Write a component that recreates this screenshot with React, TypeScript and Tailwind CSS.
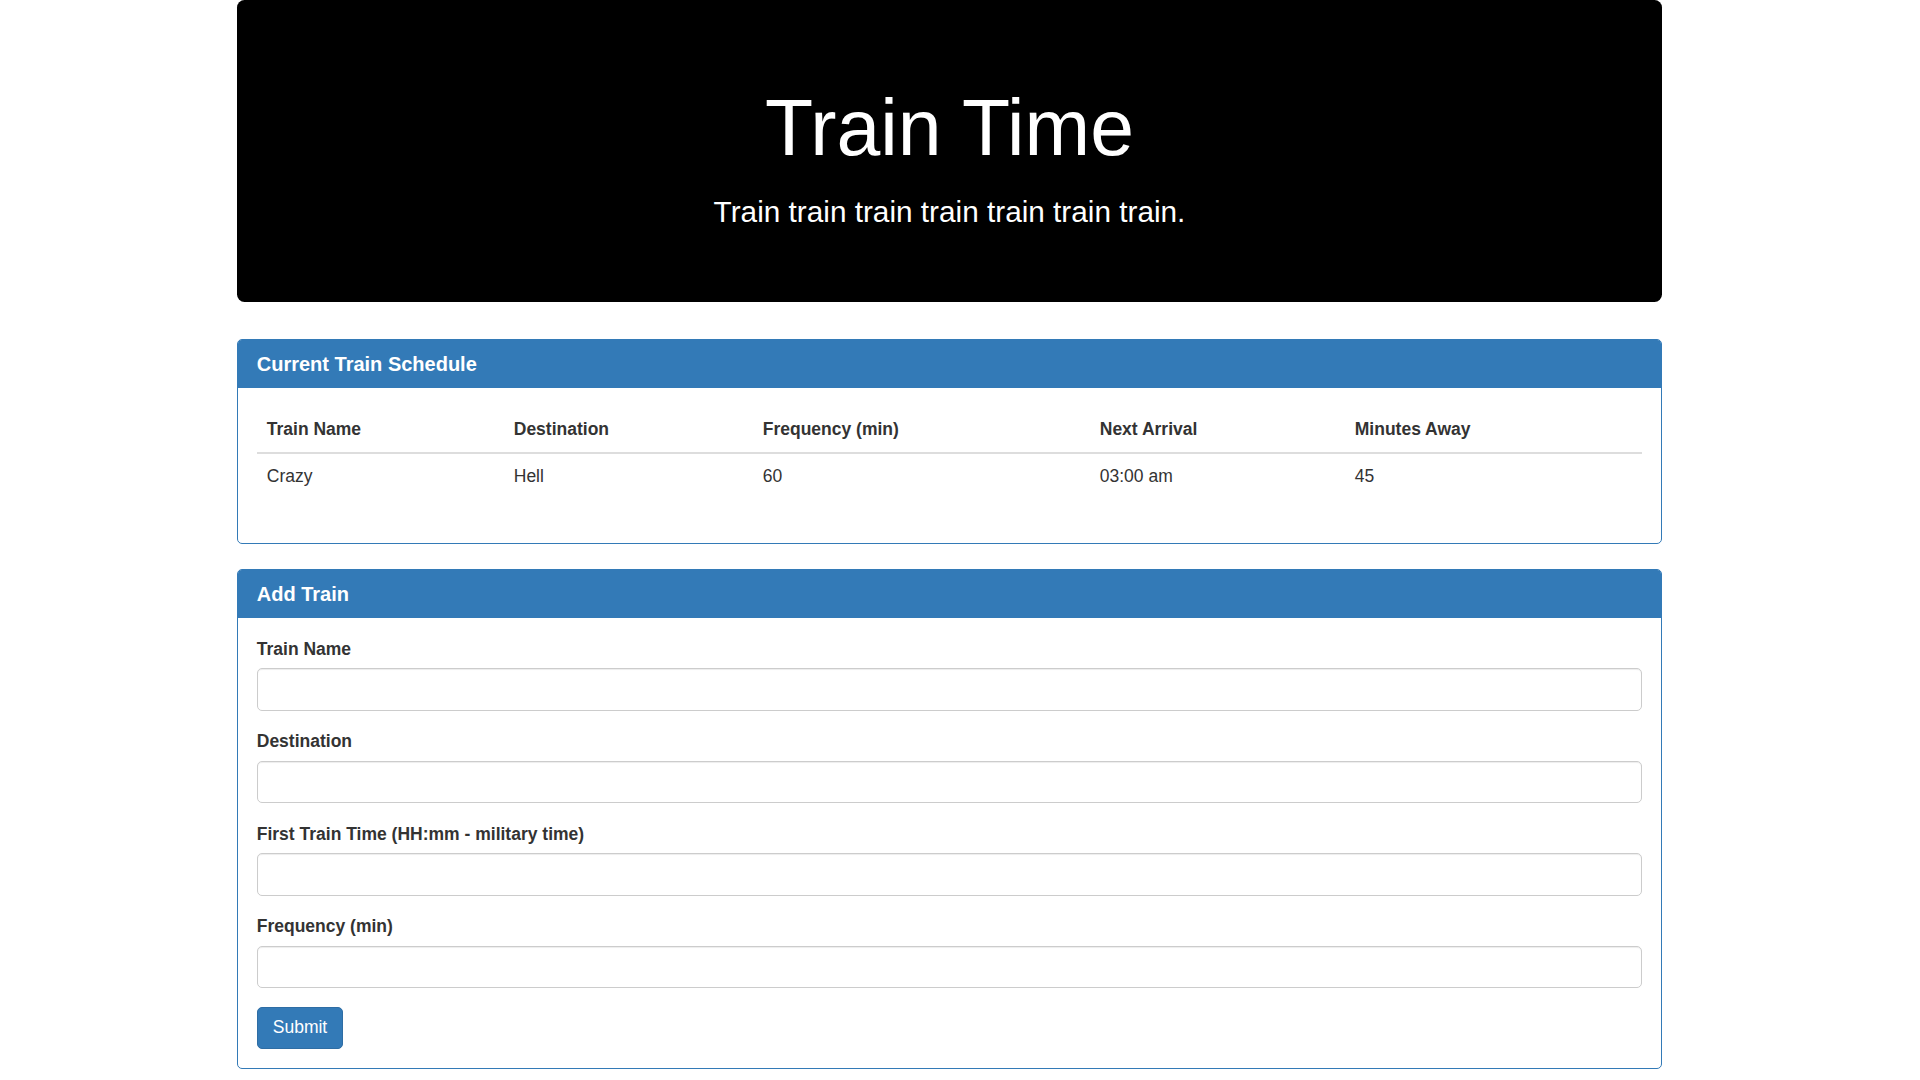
import React from 'react';

const trains = [
  { name: 'Crazy', destination: 'Hell', frequency: '60', next: '03:00 am', away: '45' },
];

const fields = [
  'Train Name',
  'Destination',
  'First Train Time (HH:mm - military time)',
  'Frequency (min)',
];

const Panel: React.FC<{ title: string; children: React.ReactNode }> = ({ title, children }) => (
  <div className="mb-[25px] rounded-[5px] border-[1.25px] border-[#337ab7] bg-white">
    <div className="rounded-t-[3.75px] border-b-[1.25px] border-transparent bg-[#337ab7] px-[18.75px] pb-[12.5px] pt-[13px]">
      <h3 className="text-[20px] font-bold leading-[22px] text-white">{title}</h3>
    </div>
    <div className="p-[18.75px]">{children}</div>
  </div>
);

export default function App() {
  return (
    <div className="min-h-screen bg-white font-['Liberation_Sans',Arial,sans-serif] text-[17.5px] leading-[25px] text-[#333]">
      <div className="ml-[237px] w-[1425px]">
        <div className="mb-[37px] rounded-[7.5px] bg-black px-[75px] pb-[68px] pt-[60px] text-center text-white">
          <h1 className="mt-[25px] text-[78.75px] font-normal leading-[86.6px]">Train Time</h1>
          <p className="mt-[19.5px] text-[29.75px] leading-[42.5px]">Train train train train train train train.</p>
        </div>

        <Panel title="Current Train Schedule">
          <table className="mb-[25px] w-full table-fixed border-collapse">
            <thead>
              <tr>
                <th className="w-[247px] border-b-[2.5px] border-[#ddd] p-[10px] text-left font-bold">Train Name</th>
                <th className="w-[249px] border-b-[2.5px] border-[#ddd] p-[10px] text-left font-bold">Destination</th>
                <th className="w-[337px] border-b-[2.5px] border-[#ddd] p-[10px] text-left font-bold">Frequency (min)</th>
                <th className="w-[255px] border-b-[2.5px] border-[#ddd] p-[10px] text-left font-bold">Next Arrival</th>
                <th className="border-b-[2.5px] border-[#ddd] p-[10px] text-left font-bold">Minutes Away</th>
              </tr>
            </thead>
            <tbody>
              {trains.map((t) => (
                <tr key={t.name}>
                  <td className="p-[10px]">{t.name}</td>
                  <td className="p-[10px]">{t.destination}</td>
                  <td className="p-[10px]">{t.frequency}</td>
                  <td className="p-[10px]">{t.next}</td>
                  <td className="p-[10px]">{t.away}</td>
                </tr>
              ))}
            </tbody>
          </table>
        </Panel>

        <Panel title="Add Train">
          <form onSubmit={(e) => e.preventDefault()}>
            {fields.map((f) => (
              <div key={f} className="mb-[18.75px]">
                <label className="mb-[6.25px] inline-block font-bold">{f}</label>
                <input
                  type="text"
                  className="block h-[42.5px] w-full rounded-[5px] border-[1.25px] border-[#ccc] bg-white px-[15px] py-[7.5px] text-[17.5px] text-[#555] shadow-[inset_0_1px_1px_rgba(0,0,0,0.075)] outline-none"
                />
              </div>
            ))}
            <button
              type="submit"
              className="rounded-[5px] border-[1.25px] border-[#2e6da4] bg-[#337ab7] px-[15px] py-[7.5px] text-[17.5px] leading-[25px] text-white"
            >
              Submit
            </button>
          </form>
        </Panel>
      </div>
    </div>
  );
}
